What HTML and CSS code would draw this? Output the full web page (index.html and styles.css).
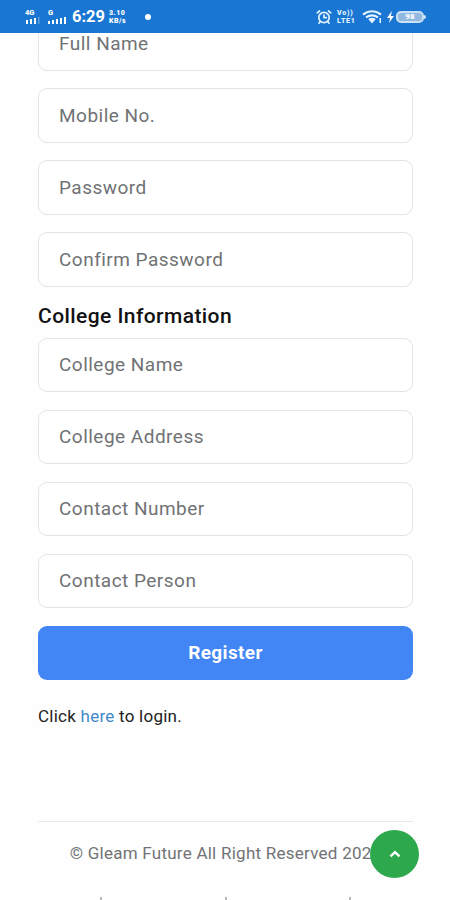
FILE: index.html
```html
<!DOCTYPE html>
<html lang="en">
<head>
<meta charset="utf-8">
<meta name="viewport" content="width=device-width, initial-scale=1">
<title>Register</title>
<link rel="stylesheet" href="styles.css">
</head>
<body>
<header class="status">
  <div class="signal">
    <span class="tiny">4G</span>
    <svg width="15" height="7" viewBox="0 0 15 7"><path d="M1 3h2v4H1zM5 2h2v5H5zM9 1h2v6H9z" fill="#fff"/><path d="M13 0h1.500v7H13z" fill="#fff" opacity=".3"/></svg>
  </div>
  <div class="signal second">
    <span class="tiny">G</span>
    <svg width="19" height="7" viewBox="0 0 19 7"><path d="M0 4h2v3H0zM4 3h2v4H4zM8 2h2v5H8zM12 1h2v6h-2zM16 0h2v7h-2z" fill="#fff"/></svg>
  </div>
  <span class="clock">6:29</span>
  <div class="speed"><span>3.10</span><span>KB/s</span></div>
  <span class="dot"></span>
  <svg class="alarm" width="16" height="16" viewBox="0 0 16 16" fill="none" stroke="#e4f3ff" stroke-width="1.700" stroke-linecap="round"><circle cx="8" cy="8.500" r="5.200"/><path d="M1.200 3.800 3.500 2M14.800 3.800 12.500 2M8 6v2.700h2.300M4 13l-1 1.100M12 13l1 1.100"/></svg>
  <div class="volte"><span>Vo))</span><span>LTE1</span></div>
  <svg class="wifi" width="20" height="16" viewBox="0 0 20 16"><path d="M1 5.500Q10-1 19 5.500M4 8.300q6-4 12 0M7 11q3-2.200 6 0" fill="none" stroke="#e4f3ff" stroke-width="2.200"/><path d="M7.500 11.500 10 14.500 12.500 11.500Q10 10 7.500 11.500zM17.500 9H19v5h-1.500z" fill="#e4f3ff"/></svg>
  <svg class="bolt" width="7" height="12" viewBox="0 0 7 12"><path d="M4.800 0 0 7h3L2 12 7 5H4z" fill="#fff"/></svg>
  <div class="battery">98</div>
</header>
<main class="page">
  <form class="form">
    <input class="field" type="text" placeholder="Full Name">
    <input class="field" type="text" placeholder="Mobile No.">
    <input class="field" type="password" placeholder="Password">
    <input class="field" type="password" placeholder="Confirm Password">
    <h2 class="heading">College Information</h2>
    <input class="field" type="text" placeholder="College Name">
    <input class="field" type="text" placeholder="College Address">
    <input class="field" type="text" placeholder="Contact Number">
    <input class="field" type="text" placeholder="Contact Person">
    <button class="register" type="button">Register</button>
  </form>
  <p class="login">Click <a href="#">here</a> to login.</p>
  <footer class="footer">
    <p class="copyright">© Gleam Future All Right Reserved 2021</p>
    <div class="marks"><i></i><i></i><i></i></div>
  </footer>
</main>
<button class="to-top" type="button" aria-label="Back to top"><svg width="12" height="8" viewBox="0 0 12 8"><path d="M1.500 6.300 6 2.200l4.500 4.100" fill="none" stroke="#fff" stroke-width="2.500"/></svg></button>
</body>
</html>
```
FILE: styles.css
```css
* { box-sizing: border-box; }
html, body { height: 100%; }
body {
  margin: 0;
  overflow: hidden;
  background: #fefefe;
  color: #222;
  font-family: Roboto, sans-serif;
}
.status {
  position: fixed;
  z-index: 2;
  top: 0;
  left: 0;
  width: 100%;
  height: 33px;
  padding: 0 24px 0 25px;
  display: flex;
  align-items: center;
  background: #1976d2;
  color: #fff;
}
.status svg { display: block; flex: none; }
.signal { width: 15px; display: flex; flex-direction: column; }
.second { width: 19px; margin-left: 8px; }
.tiny { font-size: 7.5px; line-height: 8px; font-weight: 900; }
.clock { width: 33px; margin-left: 5px; font-size: 16.5px; font-weight: 700; white-space: nowrap; }
.speed, .volte {
  display: flex;
  flex-direction: column;
  line-height: 8px;
  font-weight: 900;
}
.speed { width: 19px; margin-left: 4px; font-size: 7px; letter-spacing: .5px; }
.dot { width: 6px; height: 6px; margin-left: 17px; border-radius: 50%; background: #fff; }
.alarm { margin-left: auto; }
.volte { width: 21px; margin-left: 5px; font-size: 7px; letter-spacing: .8px; color: #e4f3ff; }
.wifi { margin-left: 4px; }
.bolt { margin: 0 2px 0 5px; }
.battery {
  position: relative;
  width: 28px;
  height: 12px;
  margin-right: 2px;
  border: 2px solid #c9e2f5;
  border-radius: 5px;
  background: #91b9df;
  font-size: 8px;
  line-height: 8px;
  font-weight: 900;
  text-align: center;
}
.battery::after {
  content: "";
  position: absolute;
  right: -4px;
  top: 2px;
  width: 2px;
  height: 4px;
  border-radius: 0 2px 2px 0;
  background: #c9e2f5;
}
.page { padding: 16px 37px 0 38px; }
.form { display: flex; flex-direction: column; gap: 17.500px; }
.field {
  width: 100%;
  height: 54.500px;
  padding: 0 20px;
  border: 1.500px solid #e3e4e5;
  border-radius: 9px;
  background: #fff;
  font: 400 19px Roboto, sans-serif;
  letter-spacing: .48px;
}
.field::placeholder { color: #707274; opacity: 1; }
.heading {
  margin: 0 0 -7px;
  height: 23px;
  font-size: 21px;
  line-height: 24px;
  font-weight: 500;
  letter-spacing: .43px;
  color: #111;
}
.register {
  height: 54px;
  border: 0;
  border-radius: 9px;
  background: #4285f4;
  color: #fff;
  font: 700 19px Roboto, sans-serif;
  letter-spacing: .35px;
}
.login { margin: 26px 0 0; font-size: 17px; line-height: 20px; letter-spacing: .25px; }
.login a { color: #4288c8; text-decoration: none; }
.footer { margin-top: 95px; border-top: 1.500px solid #e9e9e9; }
.copyright {
  margin: 20px -20px 0;
  font-size: 17px;
  line-height: 22px;
  letter-spacing: .25px;
  text-align: center;
  white-space: nowrap;
  color: #717375;
}
.marks { display: flex; justify-content: space-between; margin-top: 33px; padding: 0 62px; }
.marks i { width: 2px; height: 3px; background: #b9b9b9; }
.to-top {
  position: fixed;
  z-index: 2;
  left: 370px;
  top: 830px;
  width: 49px;
  height: 48px;
  padding: 0;
  border: 0;
  border-radius: 50%;
  background: #2ea84c;
  display: flex;
  align-items: center;
  justify-content: center;
}
```
